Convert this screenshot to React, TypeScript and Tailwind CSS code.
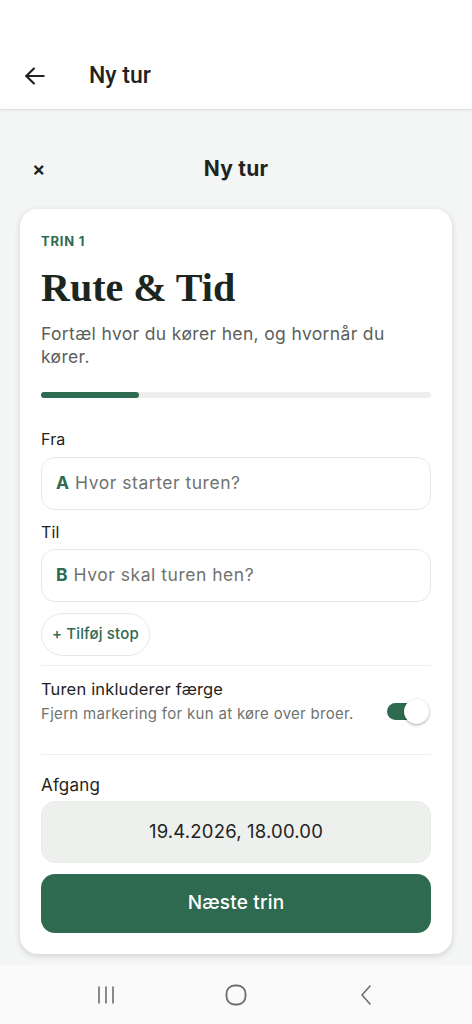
import React from "react";

export default function App() {
  const sans = { fontFamily: "Inter, 'Noto Sans', sans-serif" };
  return (
    <div className="w-[472px] h-[1024px] flex flex-col bg-[#f4f6f5] overflow-hidden" style={sans}>
      {/* top app bar */}
      <div className="bg-white h-[109px] flex items-end shrink-0 shadow-[0_1px_2px_rgba(0,0,0,0.12)] relative z-10">
        <div className="h-[66px] flex items-center pl-[22px] w-full">
          <svg width="26" height="26" viewBox="0 0 24 24" fill="none" stroke="#1f2421" strokeWidth="2" strokeLinecap="round" strokeLinejoin="round">
            <path d="M20 12H4" />
            <path d="M11 5l-7 7 7 7" />
          </svg>
          <span className="ml-[41px] text-[23px] font-medium text-[#1f2421]" style={{ fontFamily: "Roboto, sans-serif" }}>Ny tur</span>
        </div>
      </div>

      {/* sheet header */}
      <div className="relative flex items-center justify-center h-[20px] mt-[50px]">
        <span className="absolute left-[32px] text-[20px] leading-none text-[#1f2421] font-semibold">×</span>
        <span className="text-[21px] font-bold text-[#1f2421] tracking-[0.01em]">Ny tur</span>
      </div>

      {/* card */}
      <div className="mx-[20px] mt-[30px] bg-white rounded-[18px] shadow-[0_2px_6px_rgba(0,0,0,0.15)] px-[21px] pt-[23px] pb-[21px] flex flex-col">
        <div className="text-[13px] font-bold tracking-[0.06em] text-[#2e6b50]">TRIN 1</div>
        <div className="mt-[13px] text-[40px] leading-[46px] font-bold text-[#1c2620]" style={{ fontFamily: "'Liberation Serif', 'DejaVu Serif', serif" }}>Rute &amp; Tid</div>
        <div className="mt-[11px] text-[17.5px] leading-[23px] tracking-[0.02em] text-[#5b5f5c]">Fortæl hvor du kører hen, og hvornår du kører.</div>
        <div className="mt-[24px] h-[6px] rounded-full bg-[#eeeeee]">
          <div className="h-[6px] w-[25%] rounded-full bg-[#2e6b50]" />
        </div>

        <div className="mt-[29px] text-[16px] text-[#1f2421] tracking-[0.01em]">Fra</div>
        <div className="mt-[6px] h-[53px] rounded-[14px] border border-[#e6e8e6] flex items-center px-[14px] gap-[6px]">
          <span className="text-[17.5px] font-bold text-[#2e6b50]">A</span>
          <span className="text-[17.5px] tracking-[0.03em] text-[#6f7370]">Hvor starter turen?</span>
        </div>

        <div className="mt-[10px] text-[16px] text-[#1f2421] tracking-[0.01em]">Til</div>
        <div className="mt-[5px] h-[53px] rounded-[14px] border border-[#e6e8e6] flex items-center px-[14px] gap-[6px]">
          <span className="text-[17.5px] font-bold text-[#2e6b50]">B</span>
          <span className="text-[17.5px] tracking-[0.03em] text-[#6f7370]">Hvor skal turen hen?</span>
        </div>

        <div className="mt-[11px] self-start h-[43px] rounded-full border border-[#e6e8e6] px-[10px] flex items-center">
          <span className="text-[15px] font-medium tracking-[0.01em] text-[#2e6b50]">+ Tilføj stop</span>
        </div>

        <div className="mt-[9px] h-px bg-[#eeeeee]" />

        <div className="mt-[12px] flex items-center justify-between">
          <div className="flex flex-col">
            <span className="text-[16.5px] tracking-[0.01em] text-[#1f2421] leading-[22px]">Turen inkluderer færge</span>
            <span className="mt-[4px] text-[15px] tracking-[0.02em] text-[#6f7370] leading-[20px]">Fjern markering for kun at køre over broer.</span>
          </div>
          <div className="relative w-[42px] h-[24px] mr-[2px] mt-[20px]">
            <div className="absolute left-0 top-[4px] w-[36px] h-[17px] rounded-full bg-[#2e6b50]" />
            <div className="absolute right-0 top-[0px] w-[25px] h-[25px] rounded-full bg-white shadow-[0_1px_3px_rgba(0,0,0,0.35)]" />
          </div>
        </div>

        <div className="mt-[30px] h-px bg-[#eeeeee]" />

        <div className="mt-[18px] text-[17px] text-[#1f2421] tracking-[0.01em]">Afgang</div>
        <div className="mt-[3px] h-[62px] rounded-[14px] bg-[#eef0ee] border border-[#e8eae8] flex items-center justify-center">
          <span className="text-[18.5px] tracking-[0.01em] text-[#1f2421]">19.4.2026, 18.00.00</span>
        </div>

        <div className="mt-[11px] h-[59px] rounded-[14px] bg-[#2d6a4f] flex items-center justify-center">
          <span className="text-[19px] font-medium tracking-[0.01em] text-white">Næste trin</span>
        </div>
      </div>

      <div className="flex-1" />

      {/* nav bar */}
      <div className="h-[59px] bg-[#fafafa] flex items-center justify-between px-[94px] shrink-0">
        <svg width="24" height="24" viewBox="0 0 24 24" fill="none" stroke="#6d6d6d" strokeWidth="1.6" strokeLinecap="round">
          <path d="M5 4v16M12 4v16M19 4v16" />
        </svg>
        <svg width="24" height="24" viewBox="0 0 24 24" fill="none" stroke="#6d6d6d" strokeWidth="1.8">
          <rect x="2.5" y="2.5" width="19" height="19" rx="8" />
        </svg>
        <svg width="24" height="24" viewBox="0 0 24 24" fill="none" stroke="#6d6d6d" strokeWidth="1.6" strokeLinecap="round" strokeLinejoin="round">
          <path d="M16 3l-8 9 8 9" />
        </svg>
      </div>
    </div>
  );
}
